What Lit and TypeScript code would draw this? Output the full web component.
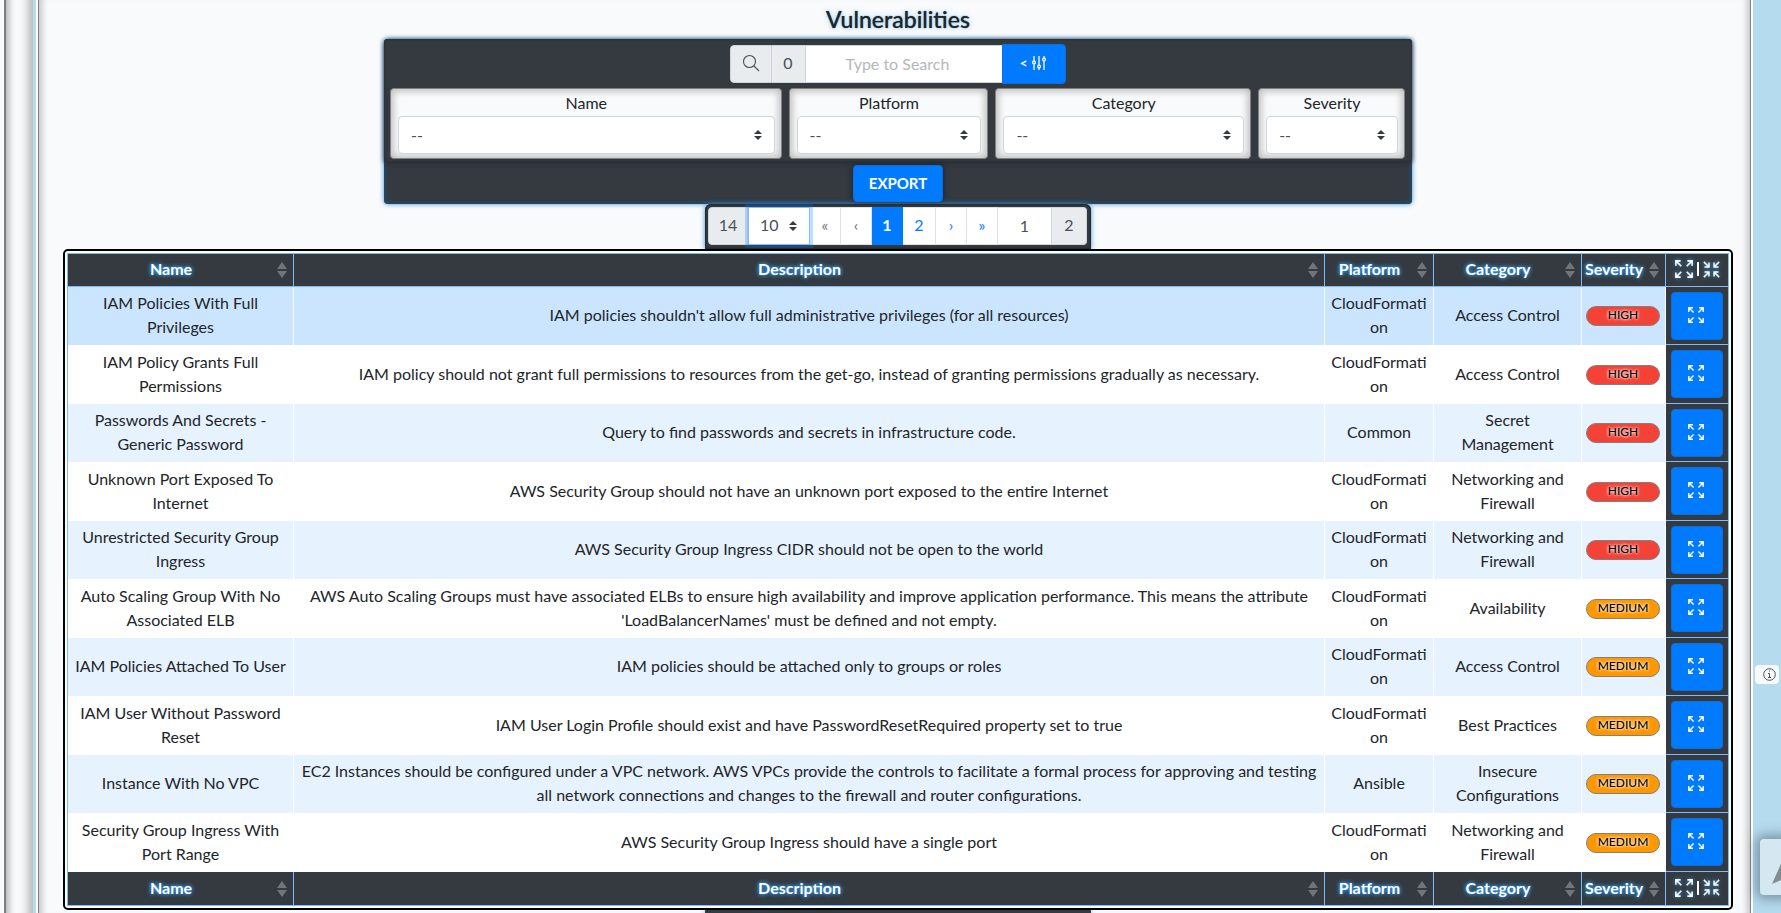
import { LitElement, html, css, svg } from "lit";
import { customElement, property, state } from "lit/decorators.js";
import { classMap } from "lit/directives/class-map.js";

type Severity = "HIGH" | "MEDIUM";
interface Finding {
  name: string;
  description: string;
  platform: string;
  category: string;
  severity: Severity;
}

const FINDINGS: Finding[] = [
  { name: "IAM Policies With Full Privileges", description: "IAM policies shouldn't allow full administrative privileges (for all resources)", platform: "CloudFormation", category: "Access Control", severity: "HIGH" },
  { name: "IAM Policy Grants Full Permissions", description: "IAM policy should not grant full permissions to resources from the get-go, instead of granting permissions gradually as necessary.", platform: "CloudFormation", category: "Access Control", severity: "HIGH" },
  { name: "Passwords And Secrets - Generic Password", description: "Query to find passwords and secrets in infrastructure code.", platform: "Common", category: "Secret Management", severity: "HIGH" },
  { name: "Unknown Port Exposed To Internet", description: "AWS Security Group should not have an unknown port exposed to the entire Internet", platform: "CloudFormation", category: "Networking and Firewall", severity: "HIGH" },
  { name: "Unrestricted Security Group Ingress", description: "AWS Security Group Ingress CIDR should not be open to the world", platform: "CloudFormation", category: "Networking and Firewall", severity: "HIGH" },
  { name: "Auto Scaling Group With No Associated ELB", description: "AWS Auto Scaling Groups must have associated ELBs to ensure high availability and improve application performance. This means the attribute 'LoadBalancerNames' must be defined and not empty.", platform: "CloudFormation", category: "Availability", severity: "MEDIUM" },
  { name: "IAM Policies Attached To User", description: "IAM policies should be attached only to groups or roles", platform: "CloudFormation", category: "Access Control", severity: "MEDIUM" },
  { name: "IAM User Without Password Reset", description: "IAM User Login Profile should exist and have PasswordResetRequired property set to true", platform: "CloudFormation", category: "Best Practices", severity: "MEDIUM" },
  { name: "Instance With No VPC", description: "EC2 Instances should be configured under a VPC network. AWS VPCs provide the controls to facilitate a formal process for approving and testing all network connections and changes to the firewall and router configurations.", platform: "Ansible", category: "Insecure Configurations", severity: "MEDIUM" },
  { name: "Security Group Ingress With Port Range", description: "AWS Security Group Ingress should have a single port", platform: "CloudFormation", category: "Networking and Firewall", severity: "MEDIUM" },
];

const COLUMNS = ["Name", "Description", "Platform", "Category", "Severity"];
const FILTERS = ["Name", "Platform", "Category", "Severity"];

const arrows = (d: string, size: number) => svg`
  <svg width=${size} height=${size} viewBox="0 0 16 16" fill="none" stroke="currentColor" stroke-width="1.4" aria-hidden="true"><path d=${d}></path></svg>`;
const EXPAND = "M.8 5V.8H5M.8.8l4.800 4.800M11 .8h4.200V5M15.200.8l-4.800 4.800M.8 11v4.200H5M.8 15.200l4.800-4.800M15.200 11v4.200H11M15.200 15.200l-4.800-4.800";
const CONTRACT = "M5.600 1.400v4.200H1.400M5.600 5.600L.8.8M10.400 1.400v4.200h4.200M10.400 5.600L15.200.8M1.400 10.400h4.200v4.200M5.600 10.400L.8 15.200M14.600 10.400h-4.200v4.200M10.400 10.400l4.800 4.800";

const controls = css`
  * { box-sizing: border-box; }
  button, input, select { font: inherit; margin: 0; }
  button { cursor: pointer; }
  select {
    appearance: none;
    height: 38px;
    color: #495057;
    border: 1px solid #ced4da;
    border-radius: 4px;
    background: #fff url("data:image/svg+xml,%3Csvg xmlns='http://www.w3.org/2000/svg' width='8' height='10' viewBox='0 0 4 5'%3E%3Cpath fill='%23343a40' d='M2 0L0 2h4zm0 5L0 3h4z'/%3E%3C/svg%3E") no-repeat right 12px center;
  }
`;

@customElement("filter-panel")
class FilterPanel extends LitElement {
  static styles = [controls, css`
    :host {
      display: block;
      width: min(1028px, 100%);
      border-radius: 4px;
      background: #343a40;
      box-shadow: 0 0 5px #3a8fd0, inset 0 0 4px 1px #1d4f7c;
      padding-bottom: 2px;
    }
    .top {
      padding: 5px 7px 3px 6px;
      border-radius: 4px;
      background: #343a40;
      box-shadow: 0 1px 5px #262c32, inset 0 0 3px #23282d;
    }
    .search { display: flex; justify-content: center; align-items: center; }
    .addon {
      display: flex; align-items: center; justify-content: center;
      height: 38px; width: 42px; padding-bottom: 2px;
      color: #495057; background: #e9ecef; border: 1px solid #ced4da;
      border-radius: 4px 0 0 4px;
    }
    .count { width: 34px; border-left: 0; border-radius: 0; }
    .term {
      width: 196px; height: 38px; padding: 0 24px 2px 12px; text-align: center;
      color: #495057; border: 1px solid #ced4da; border-width: 1px 0; border-radius: 0; background: #fff;
    }
    .term::placeholder { color: #b4b8bc; opacity: 1; }
    .toggle {
      display: flex; align-items: center; justify-content: center; gap: 4px;
      width: 64px; height: 40px; padding: 0 2px 2px 0;
      color: #fff; background: #007bff; border: 1px solid #0a6fe0; border-radius: 0 4px 4px 0;
      font-size: 14px; font-weight: 700;
    }
    .filters { display: grid; grid-template-columns: 392fr 200fr 256fr 147fr; gap: 7px; margin-top: 4px; }
    .field {
      display: flex; flex-direction: column;
      padding: 2px 6px 4px 7px;
      text-align: center;
      background: #f8fafc; border: 1px solid #808080; border-radius: 4px;
      box-shadow: inset 0 0 6px 3px #c4c4c4;
    }
    .field select { width: 100%; padding: 0 12px; margin-top: 1px; }
    .actions { display: flex; justify-content: center; margin-top: 3px; }
    .export {
      height: 37px; width: 90px; padding: 0 0 2px;
      color: #fff; background: #007bff; border: 1px solid #0a6fe0; border-radius: 4px;
      font-size: 15px; font-weight: 700;
      box-shadow: 0 0 6px #1b2025;
    }
  `];

  render() {
    return html`
      <div class="top">
        <div class="search">
          <label class="addon" for="term" aria-label="Search">
            <svg width="18" height="18" viewBox="0 0 18 18" fill="none" stroke="currentColor" stroke-width="1.1"><circle cx="7.500" cy="7.500" r="6"></circle><path d="M12 12l5 5"></path></svg>
          </label>
          <span class="addon count">0</span>
          <input id="term" class="term" type="text" placeholder="Type to Search">
          <button class="toggle" aria-label="Toggle filters"><span>&lt;</span>
            <svg width="14" height="16" viewBox="0 0 14 16" fill="none" stroke="currentColor" stroke-width="1.3"><path d="M2 1v5M2 9v6M7 1v9M7 13v2M12 1v2M12 6v9"></path><circle cx="2" cy="7.500" r="1.400"></circle><circle cx="7" cy="11.500" r="1.400"></circle><circle cx="12" cy="4.500" r="1.400"></circle></svg>
          </button>
        </div>
        <div class="filters">
          ${FILTERS.map((f) => html`
            <div class="field">
              <label for=${"f-" + f}>${f}</label>
              <select id=${"f-" + f}><option>--</option></select>
            </div>`)}
        </div>
      </div>
      <div class="actions"><button class="export">EXPORT</button></div>`;
  }
}

@customElement("page-bar")
class PageBar extends LitElement {
  @property({ type: Boolean }) active = false;

  static styles = [controls, css`
    :host {
      display: flex;
      padding: 3px 4px 4px 3px;
      background: #343a40;
      border-radius: 6px 6px 0 0;
      box-shadow: 0 0 5px #3a8fd0, inset 0 0 2px 1px #23282d;
    }
    .cell {
      display: flex; align-items: center; justify-content: center;
      width: 31px; height: 38px; padding: 0 0 2px;
      color: #007bff; background: #fff; text-decoration: none;
      border: 1px solid #dee2e6; border-left-width: 0;
    }
    .off { color: #6c757d; }
    .current { color: #fff; background: #007bff; border-color: #007bff; font-weight: 700; }
    .total, .last { color: #495057; background: #e9ecef; border-color: #ced4da; }
    .total { width: 40px; border-left-width: 1px; border-radius: 4px 0 0 4px; }
    .last { width: 35px; border-radius: 0 4px 4px 0; }
    .wide { width: 33px; }
    .jump { width: 54px; color: #495057; text-align: center; border-color: #ced4da; border-radius: 0; }
    .size { width: 62px; padding: 0 0 2px 11px; border-radius: 0; }
    .focus { border-color: #80bdff; box-shadow: 0 0 0 3px rgba(0, 123, 255, 0.25); z-index: 1; }
  `];

  render() {
    return html`
      <span class="cell total">14</span>
      <select class=${classMap({ size: true, focus: this.active })} aria-label="Rows per page"><option>10</option></select>
      <button class="cell off" aria-label="First page">«</button>
      <button class="cell off" aria-label="Previous page">‹</button>
      <button class="cell current">1</button>
      <button class="cell wide">2</button>
      <button class="cell" aria-label="Next page">›</button>
      <button class="cell" aria-label="Last page">»</button>
      <input class="cell jump" type="text" aria-label="Page" value="1">
      <span class="cell last">2</span>`;
  }
}

@customElement("findings-table")
class FindingsTable extends LitElement {
  @state() selected = 0;

  static styles = [controls, css`
    :host {
      display: block; position: relative;
      padding: 2px; background: #fff;
      border: 2px solid #000; border-radius: 5px;
    }
    table {
      width: 100%; table-layout: fixed;
      border-collapse: separate; border-spacing: 0;
      border: 1px solid #7abaff;
      text-align: center;
    }
    .c-name { width: 226px; }
    .c-platform { width: 109px; }
    .c-category { width: 148px; }
    .c-severity { width: 84px; }
    .c-action { width: 62px; }
    th {
      height: 33px; padding: 0; color: #fff; background: #343a40;
      border-right: 1px solid #7abaff;
      text-shadow: 0 0 4px #2e9bf0, 0 0 4px #2e9bf0;
    }
    thead th { border-bottom: 1px solid #7abaff; }
    th:last-child { border-right: 0; }
    .sort {
      display: flex; align-items: center; justify-content: space-between;
      width: 100%; padding: 0 6px 0 0;
      border: 0; background: none; color: inherit; text-shadow: inherit; font-weight: 700;
      line-height: 24px;
    }
    .label { flex: 1; padding: 0 3px 2px 0; }
    .sort svg { flex: none; }
    .both { display: flex; align-items: center; justify-content: center; gap: 4px; width: 100%; padding: 0 0 2px; border: 0; background: none; color: #fff; }
    .both svg { filter: drop-shadow(0 0 2px #2e9bf0); }
    .bar { width: 2px; height: 14px; background: #fff; }
    td {
      height: 58px; padding: 0 5px 2px; line-height: 24px;
      border-right: 1px solid #fff;
      overflow-wrap: anywhere;
    }
    tr:nth-child(even) td { height: 59px; }
    tr:nth-child(odd) td { background: #e7f2ff; }
    tr.selected td { background: #cce5ff; }
    tbody .action, tr:nth-child(odd) .action, tr.selected .action {
      padding: 0; background: #343a40; border-right: 0; border-bottom: 1px solid #7abaff;
    }
    .open {
      display: flex; align-items: center; justify-content: center;
      width: 52px; height: 48px; margin: 0 auto; padding: 0 2px 2px 0;
      color: #fff; background: #007bff; border: 1px solid #0a6fe0; border-radius: 4px;
    }
    td.level { padding: 0 5px 0 4px; }
    .badge {
      display: block; height: 20px; line-height: 16px;
      border: 1px solid #808080; border-radius: 10px;
      font-size: 12px; font-weight: 500; color: #000;
      text-shadow: 0 0 3px #fff, 0 0 3px #fff;
    }
    .high { background: #f44336; }
    .medium { background: #ff9800; }
  `];

  private heads() {
    return html`<tr>
      ${COLUMNS.map((c) => html`<th scope="col"><button class="sort"><span class="label">${c}</span>
        <svg width="10" height="16" viewBox="0 0 10 16" fill="#70757a" aria-hidden="true"><path d="M5 0l5 7H0zM0 9h10l-5 7z"></path></svg></button></th>`)}
      <th scope="col"><button class="both" aria-label="Expand or collapse all">
        ${arrows(EXPAND, 18)}<span class="bar"></span>${arrows(CONTRACT, 17)}
      </button></th>
    </tr>`;
  }

  render() {
    return html`<table>
      <colgroup><col class="c-name"><col><col class="c-platform"><col class="c-category"><col class="c-severity"><col class="c-action"></colgroup>
      <thead>${this.heads()}</thead>
      <tbody>
        ${FINDINGS.map((f, i) => html`<tr class=${classMap({ selected: i === this.selected })} @click=${() => (this.selected = i)}>
          <td>${f.name}</td>
          <td>${f.description}</td>
          <td>${f.platform}</td>
          <td>${f.category}</td>
          <td class="level"><span class="badge ${f.severity.toLowerCase()}">${f.severity}</span></td>
          <td class="action"><button class="open" aria-label="Expand ${f.name}">${arrows(EXPAND, 16)}</button></td>
        </tr>`)}
      </tbody>
      <tfoot>${this.heads()}</tfoot>
    </table>`;
  }
}

@customElement("app-root")
class AppRoot extends LitElement {
  static styles = [controls, css`
    :host {
      display: flex; position: relative; overflow: hidden;
      height: 100vh; padding-left: 4px;
      background: linear-gradient(90deg, #f8fafc 4px, #b5dbee 4px);
      font: 16px/24px Lato, "Liberation Sans", sans-serif;
      color: #212529;
    }
    .side {
      flex: none; width: 29px; margin-right: 3px;
      background: #f8fafc; border-left: 2px solid #808080;
      box-shadow: inset 11px 0 6px -8px #b4b4b4, inset -14px 0 9px -9px #b8b8b8;
    }
    main {
      flex: 1; min-width: 0;
      display: flex; flex-direction: column; align-items: center;
      padding: 5px 18px 0 25px;
      background: #f8fafc;
      border: solid #fff; border-width: 0 2px;
      box-shadow: inset 1px 0 #808080, inset -1px 0 #808080, inset 10px 0 6px -6px #c4c4c4, inset -10px 0 6px -6px #c4c4c4;
    }
    h1 {
      margin: 0 0 6px; font-size: 23px; line-height: 28px; font-weight: 500;
      text-shadow: 0 0 5px #8fd0f5, 0 0 1px #212529;
    }
    findings-table { align-self: stretch; }
    .foot { flex: 1; width: 386px; background: #343a40; box-shadow: 0 0 5px #3a8fd0; }
    .rail { flex: none; width: 28px; }
    .info, .send { position: absolute; right: 2px; padding: 0; border: 0; border-radius: 4px; }
    .info {
      top: 665px; width: 24px; height: 19px; color: #495057; background: #f8f9fa;
      display: flex; align-items: center; justify-content: flex-end; padding-right: 3px;
    }
    .send {
      top: 839px; right: -35px; width: 56px; height: 56px;
      background: #d5e8f1; color: #848c91;
      box-shadow: 0 0 12px 4px rgba(70, 90, 100, 0.55);
    }
  `];

  render() {
    return html`
      <aside class="side"></aside>
      <main>
        <h1>Vulnerabilities</h1>
        <filter-panel></filter-panel>
        <page-bar active></page-bar>
        <findings-table></findings-table>
        <div class="foot"></div>
      </main>
      <div class="rail"></div>
      <button class="info" aria-label="Information">
        <svg width="13" height="13" viewBox="0 0 13 13" fill="none" stroke="currentColor"><circle cx="6.500" cy="6.500" r="5.800"></circle><path d="M5 5.500h1.500v4M5 9.500h3M6 3h1"></path></svg>
      </button>
      <button class="send" aria-label="Back to top">
        <svg width="56" height="56" viewBox="0 0 56 56" fill="currentColor"><path d="M28 9L12 45l16-7 16 7z"></path></svg>
      </button>`;
  }
}
